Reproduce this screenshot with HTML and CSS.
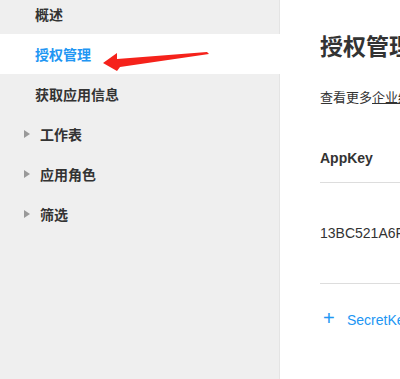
FILE: index.html
```html
<!DOCTYPE html>
<html>
<head>
  <title>授权管理</title>
  <link rel="stylesheet" href="styles.css">
</head>
<body>
<div class="layout">
  <div class="sidebar">
    <ul class="menu">
      <li class="menu-item">概述</li>
      <li class="menu-item active">授权管理</li>
      <li class="menu-item">获取应用信息</li>
      <li class="menu-item group"><span class="caret"></span>工作表</li>
      <li class="menu-item group"><span class="caret"></span>应用角色</li>
      <li class="menu-item group"><span class="caret"></span>筛选</li>
    </ul>
    <!-- annotation arrow over the menu -->
    <svg class="arrow" width="120" height="30" viewBox="100 45 120 30">
      <polygon points="103,63 117,53 117,59 207,52 209,54 120,67 117,71" fill="#f5221b"/>
    </svg>
  </div>

  <div class="main">
    <h1 class="title">授权管理</h1>
    <p class="desc">查看更多<a href="#">企业级</a>说明</p>

    <div class="key-table">
      <div class="key-head">AppKey</div>
      <div class="key-row">13BC521A6FA4E5B2</div>
    </div>

    <div class="add-secret"><span class="plus">+</span>SecretKey</div>
  </div>
</div>
</body>
</html>
```

FILE: styles.css
```css
body {
  margin: 0;
  font-family: "Liberation Sans", "Noto Sans CJK SC", sans-serif;
  color: #333;
  background: #fff;
}

.layout {
  display: flex;
  height: 379px;
  overflow: hidden;
}

.sidebar {
  position: relative;
  width: 279px;
  flex-shrink: 0;
  background-color: #efefef;
  border-right: 1px solid #e4e4e4;
}

.menu {
  list-style: none;
  margin: -6px 0 0 0;
  padding: 0;
}

.menu-item {
  display: flex;
  align-items: center;
  height: 40px;
  padding-left: 35px;
  font-size: 14px;
  font-weight: bold;
  color: #333;
}

.menu-item.active {
  background-color: #fff;
  color: #2196f3;
  margin-right: -1px;
}

.menu-item.group {
  padding-left: 24px;
}

.caret {
  width: 0;
  height: 0;
  border-top: 4.5px solid transparent;
  border-bottom: 4.5px solid transparent;
  border-left: 6px solid #999;
  margin-right: 10px;
}

.arrow {
  position: absolute;
  left: 100px;
  top: 45px;
}

.main {
  flex: 1;
  padding-left: 40px;
  white-space: nowrap;
  overflow: hidden;
}

.title {
  margin: 32px 0 0 0;
  font-size: 23px;
  line-height: 30px;
  font-weight: bold;
  color: #333;
}

.desc {
  margin: 26px 0 0 0;
  font-size: 13px;
  line-height: 20px;
}

.desc a {
  color: #333;
}

.key-table {
  margin-top: 26px;
}

.key-head {
  padding: 14px 0;
  font-size: 14px;
  line-height: 20px;
  font-weight: bold;
  border-bottom: 1px solid #ddd;
}

.key-row {
  padding: 40px 0;
  font-size: 14px;
  line-height: 20px;
  border-bottom: 1px solid #ddd;
}

.add-secret {
  margin-top: 24px;
  font-size: 14px;
  line-height: 20px;
  color: #2196f3;
}

.plus {
  display: inline-block;
  width: 24px;
  padding-left: 3px;
  font-size: 20px;
}
```
